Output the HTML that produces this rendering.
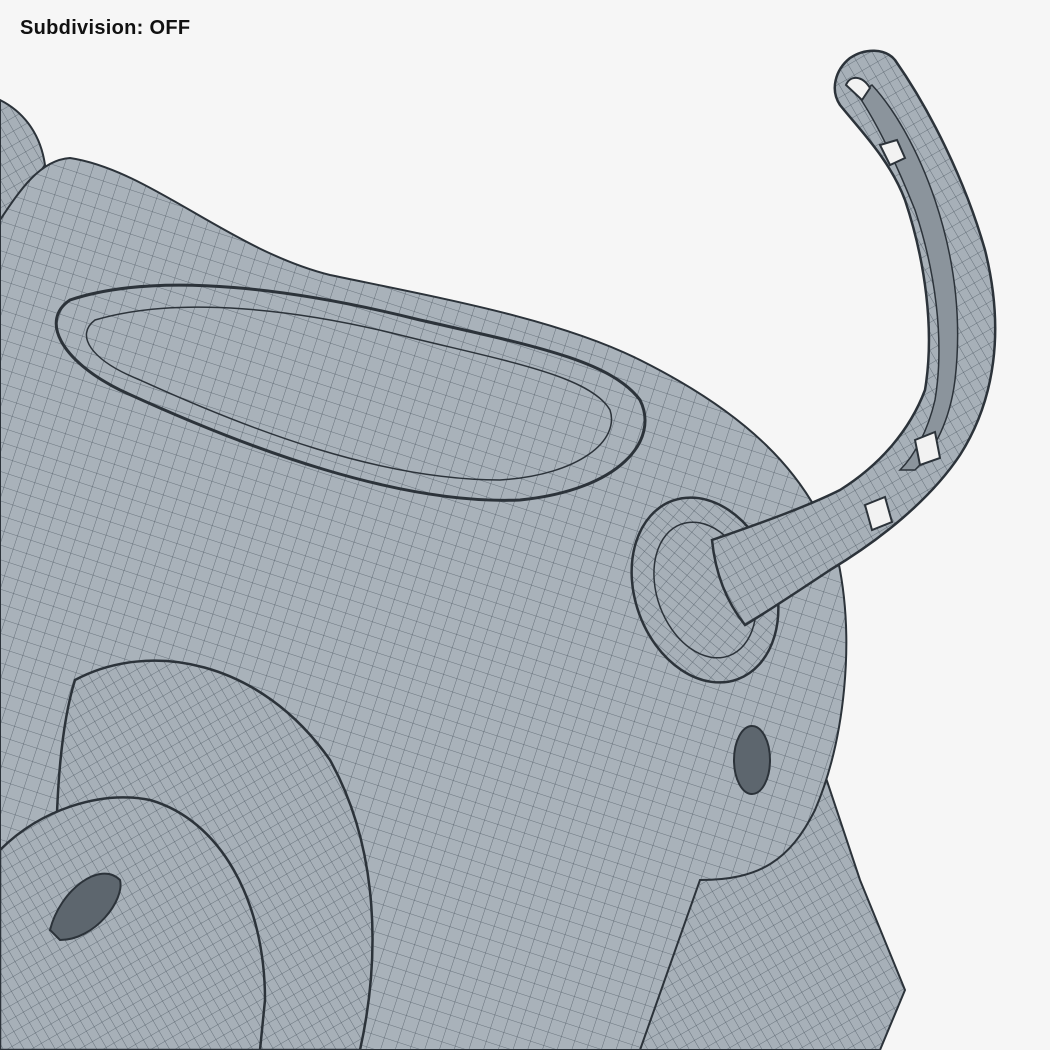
<!DOCTYPE html>
<html><head><meta charset="utf-8"><style>
html,body{margin:0;padding:0;background:#f6f6f6;width:1050px;height:1050px;overflow:hidden}
.t{position:absolute;left:20px;top:17px;font:bold 20px "Liberation Sans",sans-serif;color:#111;letter-spacing:0.3px}
</style></head><body>
<svg width="1050" height="1050" style="position:absolute;left:0;top:0">
<defs>
<pattern id="g" width="14" height="14" patternUnits="userSpaceOnUse" patternTransform="rotate(18)">
<rect width="14" height="14" fill="#a9b2ba"/>
<path d="M0 0H14M0 0V14" stroke="#55606a" stroke-width="0.8"/>
</pattern>
<pattern id="g2" width="9" height="12" patternUnits="userSpaceOnUse" patternTransform="rotate(-30)">
<rect width="9" height="12" fill="#a7b0b8"/>
<path d="M0 0H9M0 0V12" stroke="#55606a" stroke-width="0.8"/>
</pattern>
</defs>
<g stroke="#2c333a" stroke-width="2">
<path d="M700 800 L820 760 L860 880 L905 990 L880 1050 L640 1050 L660 980 Z" fill="url(#g2)"/>
<path d="M0 100 C20 110 40 130 45 165 L0 230 Z" fill="url(#g2)"/>
<path d="M0 220 C20 190 40 160 70 158 C150 170 230 250 330 275 C450 300 560 320 640 360 C740 410 810 470 838 560 C855 640 845 740 815 810 C790 860 760 880 700 880 L640 1050 L0 1050 Z" fill="url(#g)"/>
<path d="M75 680 C150 640 260 660 330 760 C380 850 380 960 360 1050 L60 1050 C55 900 50 760 75 680 Z" fill="url(#g2)" stroke-width="2.5"/>
<path d="M70 300 C160 270 300 290 420 320 C530 345 610 360 640 400 C660 440 620 490 520 500 C400 505 250 450 120 390 C60 360 40 320 70 300 Z" fill="none" stroke-width="3"/>
<path d="M95 320 C180 295 300 310 400 335 C500 360 590 375 610 410 C620 440 580 475 500 480 C380 480 250 430 140 380 C90 360 75 335 95 320 Z" fill="none" stroke-width="1.5"/>
<ellipse cx="705" cy="590" rx="70" ry="95" transform="rotate(-20 705 590)" fill="url(#g2)" stroke-width="2.5"/>
<ellipse cx="705" cy="590" rx="48" ry="70" transform="rotate(-20 705 590)" fill="none" stroke-width="1.5"/>
<ellipse cx="752" cy="760" rx="18" ry="34" fill="#5d666e"/>
<path d="M0 850 C40 810 100 790 150 800 C220 820 265 900 265 1000 L260 1050 L0 1050 Z" fill="url(#g2)" stroke-width="2.5"/>
<path d="M50 930 C60 890 100 860 120 880 C125 900 95 940 60 940 Z" fill="#5d666e"/>
<!-- tail -->
<path d="M712 540 C770 520 810 505 840 490 C880 465 910 430 925 390 C935 330 925 260 905 200 C890 160 860 130 840 105 C830 90 835 70 850 58 C865 48 885 48 895 60 C930 110 965 180 985 250 C1005 330 995 400 960 455 C930 500 880 540 830 570 C800 590 770 610 745 625 C725 600 715 570 712 540 Z" fill="url(#g2)" stroke-width="2.5"/>
<!-- slot -->
<path d="M858 95 C875 120 895 160 915 210 C935 270 945 340 935 400 C928 430 915 455 900 470 L915 470 C935 450 950 420 955 380 C962 320 955 260 935 200 C918 150 895 110 872 85 Z" fill="#8b949c" stroke-width="1.5"/>
<path d="M846 85 C850 75 862 75 870 88 L862 100 Z" fill="#f2f2f2"/>
<path d="M880 145 L897 140 L905 158 L890 165 Z" fill="#f2f2f2"/>
<path d="M915 440 L935 432 L940 458 L920 465 Z" fill="#f2f2f2"/>
<path d="M865 505 L885 497 L892 522 L872 530 Z" fill="#f2f2f2"/>
<path d="M712 540 C715 570 725 600 745 625" fill="none" stroke-width="1.5"/>
</g>
</svg>
<div class="t">Subdivision: OFF</div>
</body></html>
